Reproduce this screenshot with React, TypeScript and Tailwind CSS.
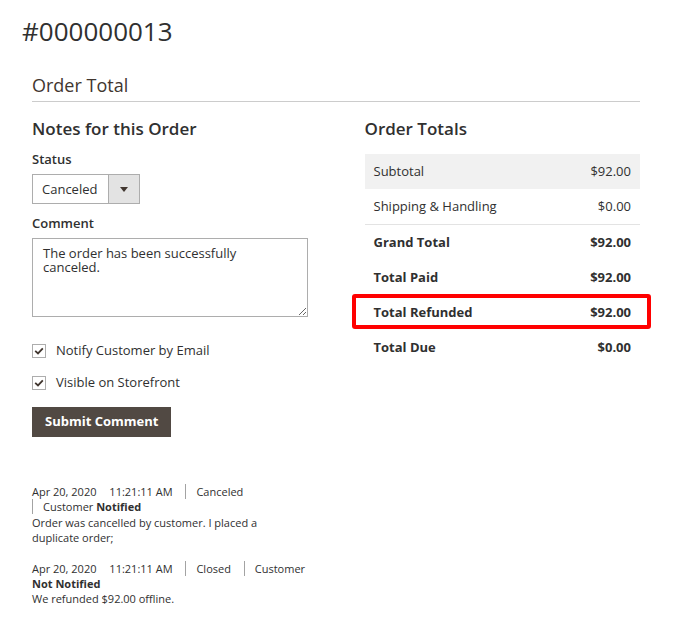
import React from "react";

const totals = [
  { label: "Subtotal", value: "$92.00", shade: true },
  { label: "Shipping & Handling", value: "$0.00" },
];

const boldTotals = [
  { label: "Grand Total", value: "$92.00" },
  { label: "Total Paid", value: "$92.00" },
  { label: "Total Refunded", value: "$92.00", marked: true },
  { label: "Total Due", value: "$0.00" },
];

const Check = ({ label }: { label: string }) => (
  <label className="flex items-center h-[20px] text-[13px] text-[#303030]">
    <span className="w-[14px] h-[14px] border border-[#adadad] bg-white flex items-center justify-center mr-[10px]">
      <svg width="10" height="8" viewBox="0 0 10 8">
        <polyline points="1.2,3.8 4,6.4 8.8,1.4" fill="none" stroke="#41362f" strokeWidth="1.8" />
      </svg>
    </span>
    {label}
  </label>
);

const App = () => {
  return (
    <div className="w-[684px] h-[617px] bg-white font-['Open_Sans',sans-serif] text-[#303030] px-[22px] pt-[15px]">
      <h1 className="text-[26px] leading-[32px] font-normal text-[#303030]">#000000013</h1>

      <section className="ml-[10px] w-[608px] mt-[26px]">
        <div className="border-b border-[#cccccc] pb-[4px]">
          <h2 className="text-[18px] leading-[24px] font-normal text-[#41362f]">Order Total</h2>
        </div>

        <div className="grid grid-cols-2 gap-[57px] mt-[17px]">
          {/* Notes */}
          <div>
            <h3 className="text-[17px] leading-[20px] font-semibold text-[#303030]">Notes for this Order</h3>

            <div className="mt-[12px] text-[13px] leading-[16px] font-semibold">Status</div>
            <div className="mt-[7px] flex w-[108px] h-[30px] border border-[#adadad] bg-white">
              <div className="flex-1 flex items-center pl-[9px] pt-[1px] text-[13px]">Canceled</div>
              <div className="w-[31px] border-l border-[#adadad] bg-[#e3e3e3] flex items-center justify-center">
                <svg width="8" height="5" viewBox="0 0 8 5">
                  <polygon points="0,0 8,0 4,5" fill="#41362f" />
                </svg>
              </div>
            </div>

            <div className="mt-[11px] text-[13px] leading-[16px] font-semibold">Comment</div>
            <textarea
              readOnly
              defaultValue="The order has been successfully canceled."
              className="mt-[7px] block w-[276px] h-[79px] border border-[#adadad] pl-[10px] pr-[20px] pt-[7px] text-[13px] leading-[14px] text-[#303030] outline-none"
            />

            <div className="mt-[24px] flex flex-col gap-[12px]">
              <Check label="Notify Customer by Email" />
              <Check label="Visible on Storefront" />
            </div>

            <button className="mt-[14px] h-[30px] px-[13px] bg-[#514943] text-white text-[13px] font-bold">
              Submit Comment
            </button>

            {/* History */}
            <ul className="mt-[47px] text-[11px] leading-[15.4px] text-[#303030]">
              <li>
                <span className="pr-[10px]">Apr 20, 2020</span>{" "}
                <span className="pr-[10px]">11:21:11 AM</span>{" "}
                <span className="border-l border-[#a3a3a3] pl-[10px] pr-[10px]">Canceled</span>{" "}
                <span className="border-l border-[#a3a3a3] pl-[10px]">
                  Customer <span className="font-bold">Notified</span>
                </span>
                <div className="w-[270px]">Order was cancelled by customer. I placed a duplicate order;</div>
              </li>
              <li className="mt-[15px]">
                <span className="pr-[10px]">Apr 20, 2020</span>{" "}
                <span className="pr-[10px]">11:21:11 AM</span>{" "}
                <span className="border-l border-[#a3a3a3] pl-[10px] pr-[10px]">Closed</span>{" "}
                <span className="border-l border-[#a3a3a3] pl-[10px]">
                  Customer <span className="font-bold">Not Notified</span>
                </span>
                <div>We refunded $92.00 offline.</div>
              </li>
            </ul>
          </div>

          {/* Totals */}
          <div>
            <h3 className="text-[17px] leading-[20px] font-semibold text-[#303030]">Order Totals</h3>
            <div className="mt-[15px] text-[13px]">
              {totals.map((t) => (
                <div
                  key={t.label}
                  className={`flex justify-between items-center h-[35px] px-[9px] ${t.shade ? "bg-[#f1f1f1]" : ""}`}
                >
                  <span>{t.label}</span>
                  <span>{t.value}</span>
                </div>
              ))}
              <div className="border-t border-[#e3e3e3]" />
              {boldTotals.map((t) => (
                <div key={t.label} className="relative flex justify-between items-center h-[35px] px-[9px] font-bold">
                  <span>{t.label}</span>
                  <span>{t.value}</span>
                  {t.marked && (
                    <span className="absolute left-[-13px] right-[-11px] top-[-1px] bottom-[1px] border-[4px] border-[#ff0000] rounded-[3px]" />
                  )}
                </div>
              ))}
            </div>
          </div>
        </div>
      </section>
    </div>
  );
};

export default App;
